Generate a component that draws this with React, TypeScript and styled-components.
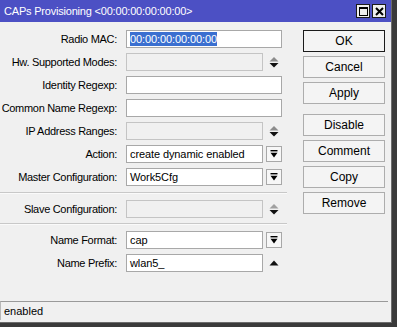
import styled, { createGlobalStyle } from "styled-components";

const GlobalStyle = createGlobalStyle`
  html, body {
    margin: 0;
    padding: 0;
    background: #3a3a3a;
  }
  body {
    font-family: "Liberation Sans", Arial, sans-serif;
    font-size: 11px;
    color: #000;
  }
`;

const Window = styled.div`
  width: 391px;
  height: 322px;
  display: flex;
  flex-direction: column;
  background: #f0f0f0;
  border-right: 1px solid #6c6c6c;
  border-bottom: 1px solid #6c6c6c;
`;

const TitleBar = styled.div`
  height: 22px;
  background: #4c50c4;
  display: flex;
  align-items: center;
  padding: 0 5px 0 4px;
  color: #fff;
  font-size: 11px;
  letter-spacing: -0.2px;
`;

const TitleText = styled.div`
  flex: 1;
`;

const TitleButtons = styled.div`
  display: flex;
  gap: 2px;
`;

const TitleButton = styled.div`
  width: 12px;
  height: 12px;
  border: 1px solid #1a1a1a;
  background: #eeeeee;
  display: flex;
  align-items: center;
  justify-content: center;
`;

const Body = styled.div`
  flex: 1;
  display: flex;
  padding-top: 8px;
`;

const Form = styled.div`
  width: 287px;
  display: flex;
  flex-direction: column;
`;

const Row = styled.div<{ $mt?: number }>`
  display: grid;
  grid-template-columns: 121px 142px 19px;
  align-items: center;
  height: 18px;
  margin-top: ${(p) => p.$mt ?? 5}px;
`;

const Label = styled.div`
  text-align: right;
  padding-right: 4px;
  white-space: nowrap;
  letter-spacing: -0.3px;
`;

const Input = styled.div<{ $disabled?: boolean; $full?: boolean }>`
  grid-column: ${(p) => (p.$full ? "2 / 4" : "2 / 3")};
  height: 18px;
  box-sizing: border-box;
  margin-left: 5px;
  border: 1px solid ${(p) => (p.$disabled ? "#c4c4c4" : "#a8a8a8")};
  background: ${(p) => (p.$disabled ? "#f0f0f0" : "#fff")};
  padding-left: 3px;
  display: flex;
  align-items: center;
  white-space: nowrap;
  overflow: hidden;
  letter-spacing: -0.1px;
`;

const Selected = styled.span`
  background: #3a6fd0;
  color: #fff;
  padding: 1px 0;
`;

const Side = styled.div`
  display: flex;
  justify-content: flex-end;
  align-items: center;
  height: 18px;
`;

const DropButton = styled.div`
  width: 16px;
  height: 16px;
  box-sizing: border-box;
  border: 1px solid #a8a8a8;
  background: #f7f7f7;
  display: flex;
  align-items: center;
  justify-content: center;
`;

const Spinner = styled.div`
  width: 16px;
  display: flex;
  justify-content: center;
`;

const Separator = styled.div<{ $mt: number }>`
  height: 1px;
  background: #c8c8c8;
  border-bottom: 1px solid #fafafa;
  margin-top: ${(p) => p.$mt}px;
`;

const Buttons = styled.div`
  margin-left: 16px;
  width: 82px;
  display: flex;
  flex-direction: column;
  gap: 4px;
`;

const Button = styled.div<{ $default?: boolean; $mt?: number }>`
  height: 22px;
  box-sizing: border-box;
  border: 1px solid ${(p) => (p.$default ? "#1a1a1a" : "#adadad")};
  background: #f4f4f4;
  display: flex;
  align-items: center;
  justify-content: center;
  font-size: 12px;
  margin-top: ${(p) => p.$mt ?? 0}px;
`;

const StatusBar = styled.div`
  height: 18px;
  margin: 0 3px 2px 0;
  border-top: 1px solid #9a9a9a;
  border-left: 1px solid #b8b8b8;
  display: flex;
  align-items: center;
  padding-left: 3px;
`;

const DropIcon = () => (
  <svg width="8" height="8" viewBox="0 0 8 8">
    <rect x="0.5" y="0" width="7" height="1.4" fill="#000" />
    <polygon points="0.5,2.8 7.5,2.8 4,7.5" fill="#000" />
  </svg>
);

const SpinIcon = ({ upColor = "#8c8c8c" }: { upColor?: string }) => (
  <svg width="10" height="11" viewBox="0 0 10 11">
    <polygon points="0.5,4.5 9.5,4.5 5,0" fill={upColor} />
    <polygon points="0.5,6 9.5,6 5,10.5" fill="#111" />
  </svg>
);

const UpIcon = () => (
  <svg width="10" height="6" viewBox="0 0 10 6">
    <polygon points="0.5,5.5 9.5,5.5 5,0.5" fill="#111" />
  </svg>
);

export default function App() {
  return (
    <>
      <GlobalStyle />
      <Window>
        <TitleBar>
          <TitleText>CAPs Provisioning &lt;00:00:00:00:00:00&gt;</TitleText>
          <TitleButtons>
            <TitleButton>
              <svg width="9" height="9" viewBox="0 0 9 9">
                <rect x="0.5" y="0.5" width="8" height="8" fill="none" stroke="#000" />
                <rect x="0.5" y="0.5" width="8" height="1.5" fill="#000" />
              </svg>
            </TitleButton>
            <TitleButton>
              <svg width="9" height="9" viewBox="0 0 9 9">
                <path d="M1 1 L8 8 M8 1 L1 8" stroke="#000" strokeWidth="2" />
              </svg>
            </TitleButton>
          </TitleButtons>
        </TitleBar>
        <Body>
          <Form>
            <Row $mt={0}>
              <Label>Radio MAC:</Label>
              <Input $full>
                <Selected>00:00:00:00:00:00</Selected>
              </Input>
            </Row>
            <Row>
              <Label>Hw. Supported Modes:</Label>
              <Input $disabled />
              <Side>
                <Spinner>
                  <SpinIcon />
                </Spinner>
              </Side>
            </Row>
            <Row>
              <Label>Identity Regexp:</Label>
              <Input $full />
            </Row>
            <Row>
              <Label>Common Name Regexp:</Label>
              <Input $full />
            </Row>
            <Row>
              <Label>IP Address Ranges:</Label>
              <Input $disabled />
              <Side>
                <Spinner>
                  <SpinIcon />
                </Spinner>
              </Side>
            </Row>
            <Row>
              <Label>Action:</Label>
              <Input>create dynamic enabled</Input>
              <Side>
                <DropButton>
                  <DropIcon />
                </DropButton>
              </Side>
            </Row>
            <Row>
              <Label>Master Configuration:</Label>
              <Input>Work5Cfg</Input>
              <Side>
                <DropButton>
                  <DropIcon />
                </DropButton>
              </Side>
            </Row>
            <Separator $mt={6} />
            <Row $mt={6}>
              <Label>Slave Configuration:</Label>
              <Input $disabled />
              <Side>
                <Spinner>
                  <SpinIcon upColor="#a0a0a0" />
                </Spinner>
              </Side>
            </Row>
            <Separator $mt={5} />
            <Row $mt={6}>
              <Label>Name Format:</Label>
              <Input>cap</Input>
              <Side>
                <DropButton>
                  <DropIcon />
                </DropButton>
              </Side>
            </Row>
            <Row>
              <Label>Name Prefix:</Label>
              <Input>wlan5_</Input>
              <Side>
                <Spinner>
                  <UpIcon />
                </Spinner>
              </Side>
            </Row>
          </Form>
          <Buttons>
            <Button $default>OK</Button>
            <Button>Cancel</Button>
            <Button>Apply</Button>
            <Button $mt={6}>Disable</Button>
            <Button>Comment</Button>
            <Button>Copy</Button>
            <Button>Remove</Button>
          </Buttons>
        </Body>
        <StatusBar>enabled</StatusBar>
      </Window>
    </>
  );
}
